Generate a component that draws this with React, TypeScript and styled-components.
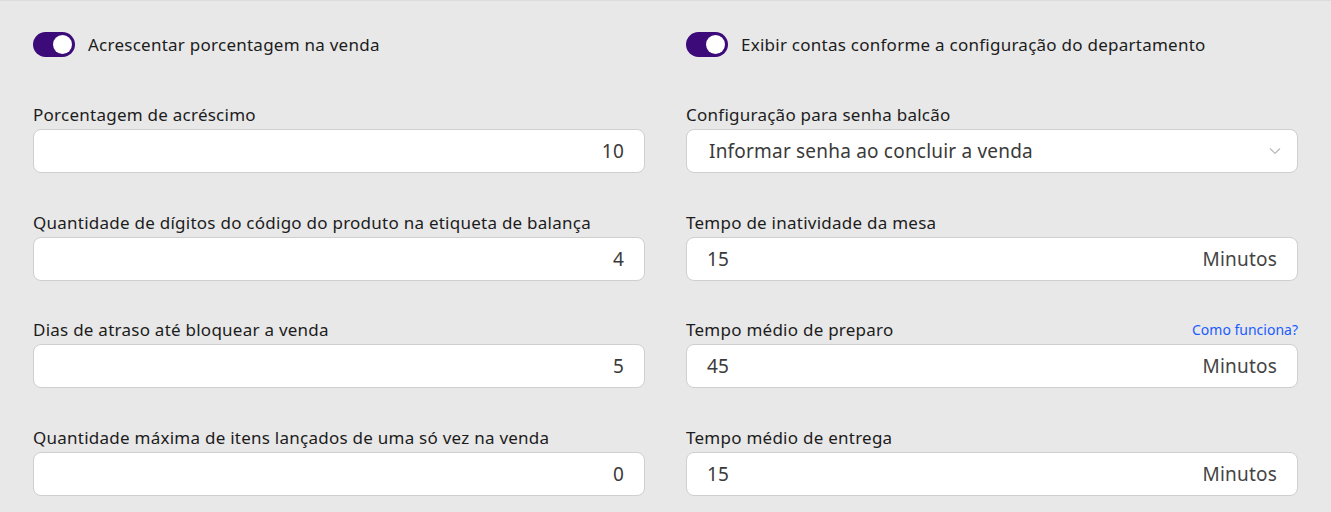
import React from 'react'
import styled, { createGlobalStyle } from 'styled-components'

const GlobalStyle = createGlobalStyle`
  html, body {
    margin: 0;
    padding: 0;
    background: #e8e8e8;
  }
  body {
    font-family: 'Noto Sans', 'Lato', sans-serif;
    color: #1c1c1c;
  }
`

const Page = styled.div`
  width: 1331px;
  height: 512px;
  box-sizing: border-box;
  border-top: 1px solid #dcdcdc;
  background: #e8e8e8;
  padding: 30px 33px 0 33px;
  display: grid;
  grid-template-columns: 1fr 1fr;
  column-gap: 41px;
  overflow: hidden;
`

const Column = styled.div`
  display: flex;
  flex-direction: column;
`

const ToggleRow = styled.label`
  display: flex;
  align-items: center;
  gap: 13px;
  height: 26px;
  margin-bottom: 47px;
  font-size: 17px;
  letter-spacing: 0.25px;
  cursor: pointer;
`

const Track = styled.span<{ $on: boolean }>`
  position: relative;
  width: 42px;
  height: 25px;
  border-radius: 13px;
  background: ${p => (p.$on ? '#3d0a7a' : '#bdbdbd')};
  flex-shrink: 0;
`

const Knob = styled.span<{ $on: boolean }>`
  position: absolute;
  top: 3px;
  left: ${p => (p.$on ? '20px' : '3px')};
  width: 19px;
  height: 19px;
  border-radius: 50%;
  background: #ffffff;
`

const Field = styled.div`
  display: flex;
  flex-direction: column;
  margin-bottom: 38.5px;
`

const LabelRow = styled.div`
  display: flex;
  justify-content: space-between;
  align-items: center;
  height: 21px;
  margin-bottom: 4px;
`

const Label = styled.span`
  font-size: 17px;
  letter-spacing: 0.25px;
`

const HelpLink = styled.a`
  font-size: 14px;
  color: #1a5cff;
  text-decoration: none;
`

const InputBox = styled.div`
  display: flex;
  align-items: center;
  justify-content: space-between;
  height: 44px;
  box-sizing: border-box;
  background: #ffffff;
  border: 1px solid #cfcfcf;
  border-radius: 8px;
  padding: 0 20px;
  font-size: 19px;
  letter-spacing: 0.2px;
  color: #3a3a3a;
`

const Value = styled.span<{ $align?: 'left' | 'right' }>`
  flex: 1;
  text-align: ${p => p.$align ?? 'right'};
`

const Suffix = styled.span`
  color: #444;
`

const SelectBox = styled(InputBox)`
  padding: 0 16px 0 22px;
`

const Chevron = () => (
  <svg width="12" height="8" viewBox="0 0 12 8" fill="none">
    <path d="M1 1.5L6 6.5L11 1.5" stroke="#b8b8b8" strokeWidth="1.2" />
  </svg>
)

const Toggle = ({ label, on }: { label: string; on: boolean }) => (
  <ToggleRow>
    <Track $on={on}>
      <Knob $on={on} />
    </Track>
    {label}
  </ToggleRow>
)

const NumberField = ({ label, value }: { label: string; value: string }) => (
  <Field>
    <LabelRow>
      <Label>{label}</Label>
    </LabelRow>
    <InputBox>
      <Value>{value}</Value>
    </InputBox>
  </Field>
)

const MinutesField = ({ label, value, help }: { label: string; value: string; help?: boolean }) => (
  <Field>
    <LabelRow>
      <Label>{label}</Label>
      {help && <HelpLink href="#">Como funciona?</HelpLink>}
    </LabelRow>
    <InputBox>
      <Value $align="left">{value}</Value>
      <Suffix>Minutos</Suffix>
    </InputBox>
  </Field>
)

export default function App() {
  return (
    <>
      <GlobalStyle />
      <Page>
        <Column>
          <Toggle label="Acrescentar porcentagem na venda" on />
          <NumberField label="Porcentagem de acréscimo" value="10" />
          <NumberField label="Quantidade de dígitos do código do produto na etiqueta de balança" value="4" />
          <NumberField label="Dias de atraso até bloquear a venda" value="5" />
          <NumberField label="Quantidade máxima de itens lançados de uma só vez na venda" value="0" />
        </Column>
        <Column>
          <Toggle label="Exibir contas conforme a configuração do departamento" on />
          <Field>
            <LabelRow>
              <Label>Configuração para senha balcão</Label>
            </LabelRow>
            <SelectBox>
              <Value $align="left">Informar senha ao concluir a venda</Value>
              <Chevron />
            </SelectBox>
          </Field>
          <MinutesField label="Tempo de inatividade da mesa" value="15" />
          <MinutesField label="Tempo médio de preparo" value="45" help />
          <MinutesField label="Tempo médio de entrega" value="15" />
        </Column>
      </Page>
    </>
  )
}
